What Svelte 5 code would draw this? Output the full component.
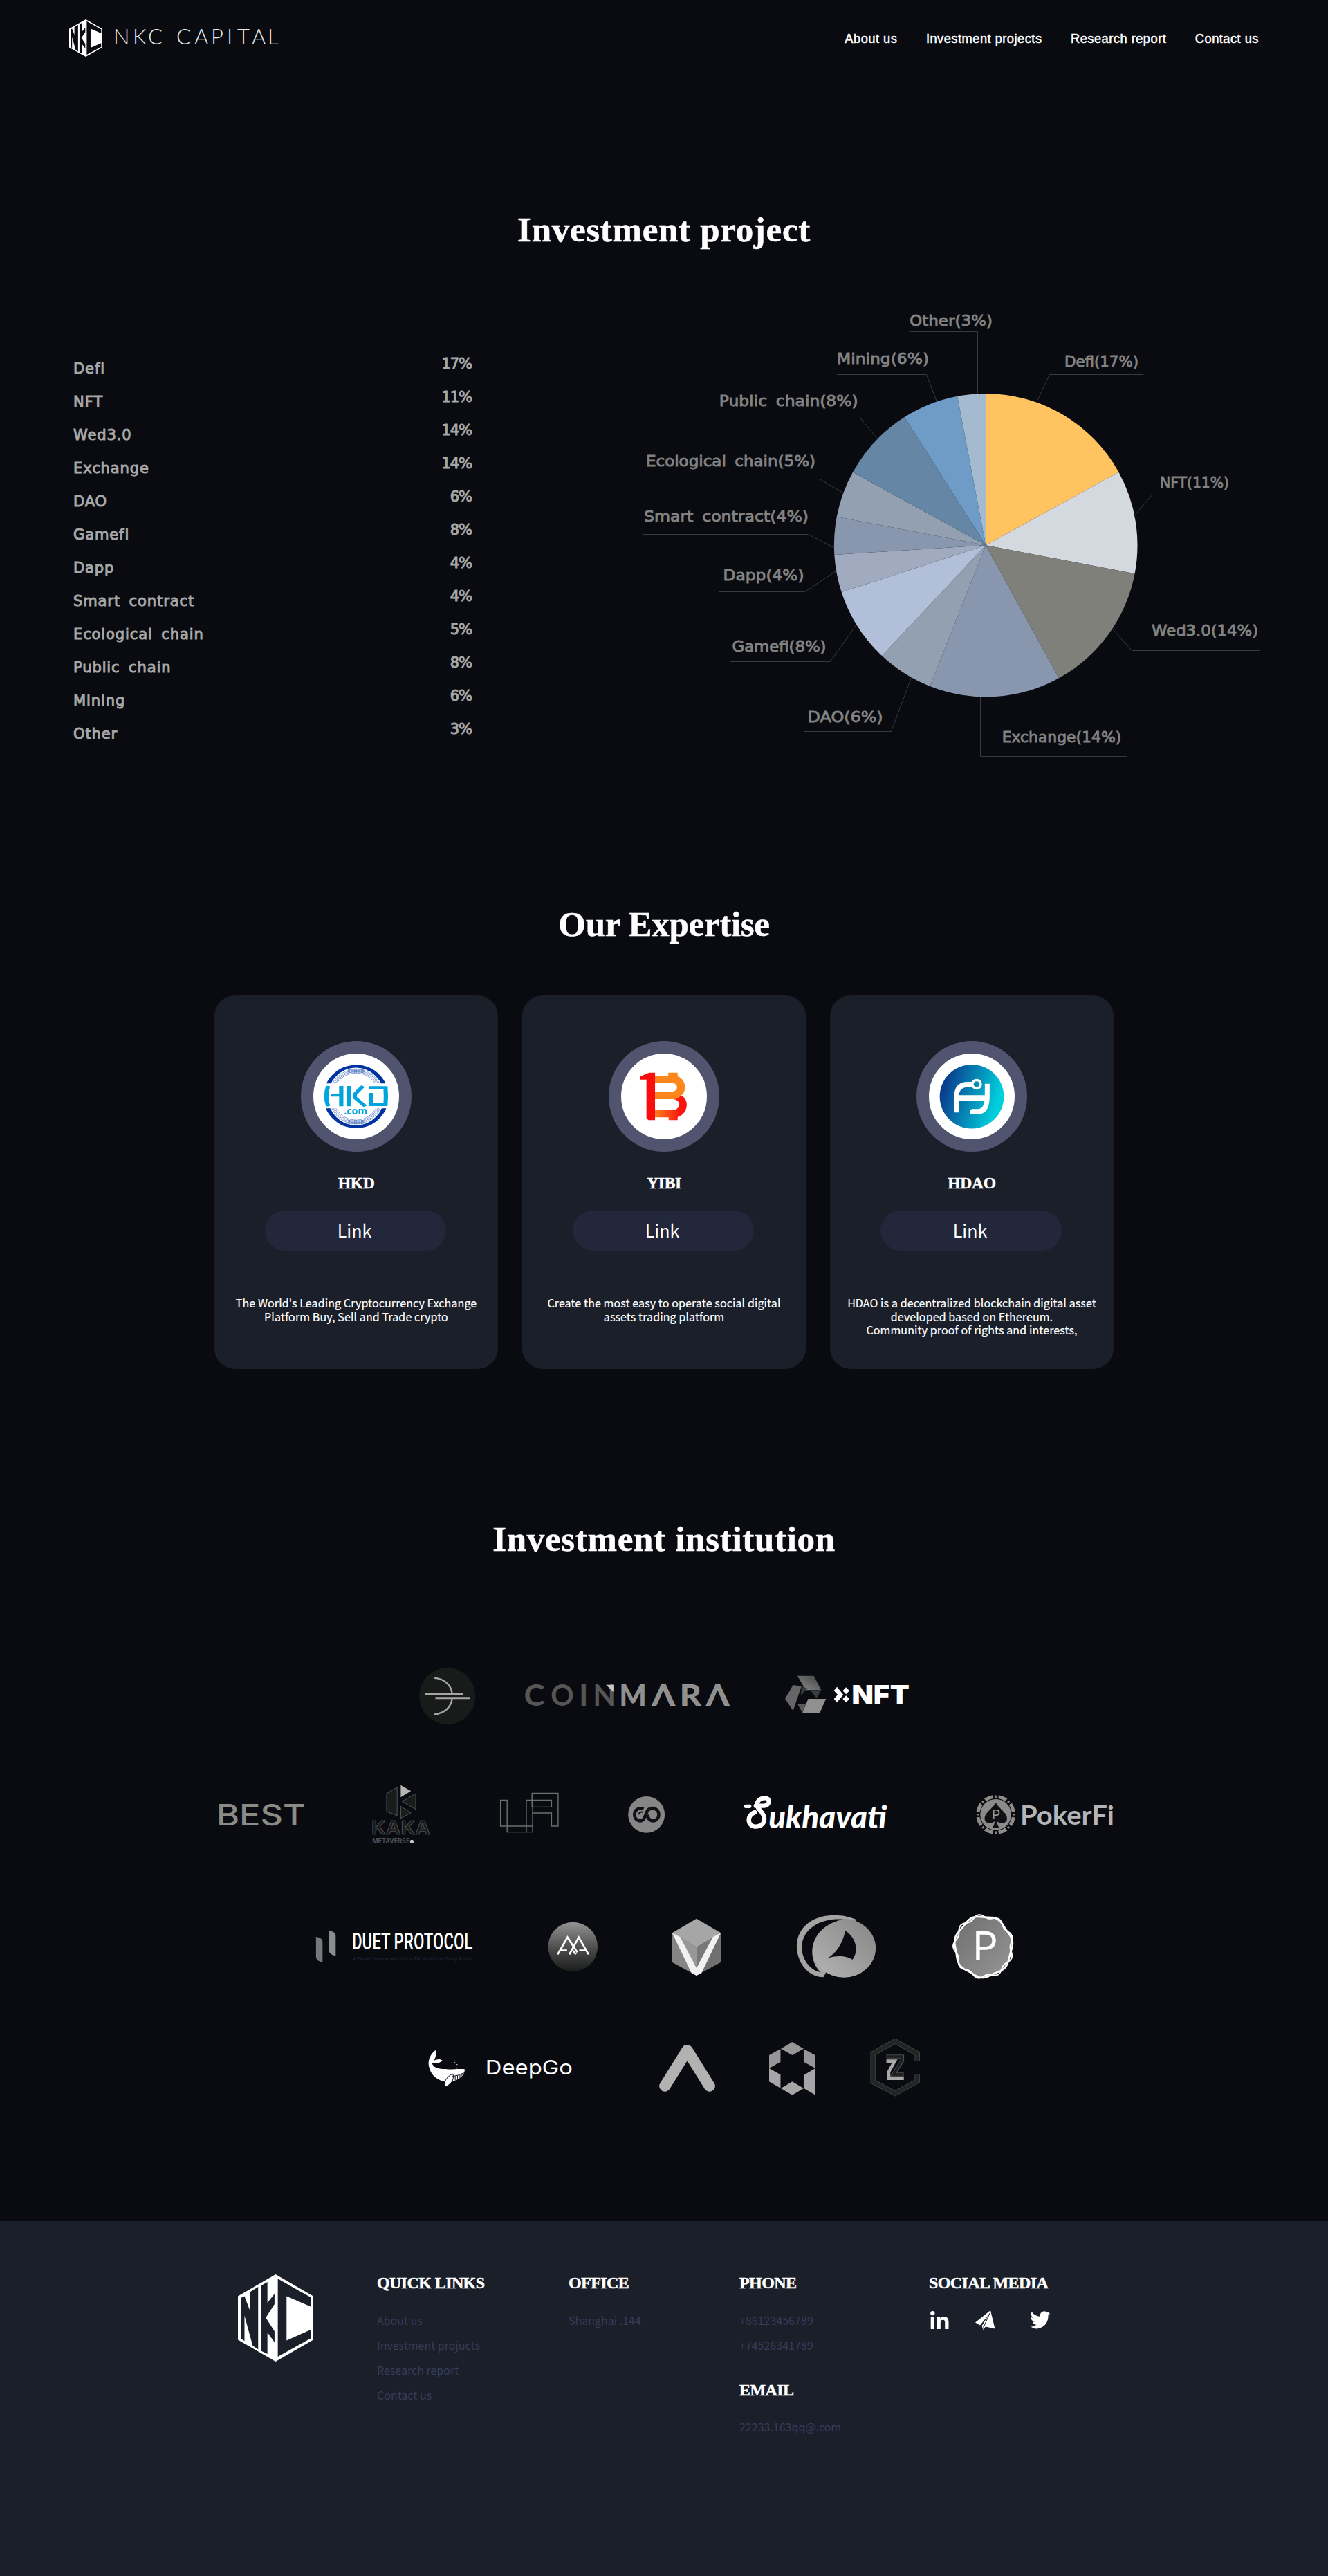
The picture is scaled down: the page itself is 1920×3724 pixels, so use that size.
<script>
  const nav = ['About us', 'Investment projects', 'Research report', 'Contact us'];

  // Share of each sector, with its callout line and label on the 920 x 690 chart canvas
  const sectors = [
    { name: 'Defi', share: 17, color: '#ffc360', line: '579,150.5 597.3,111.5 733.4,111.5', x: 619, y: 100.3, w: 107 },
    { name: 'NFT', share: 11, color: '#d4d8df', line: '721,314.2 745.8,285.5 864.3,285.5', x: 757, y: 274.6, w: 100 },
    { name: 'Wed3.0', share: 14, color: '#80807a', line: '688.3,479.2 716.4,510.5 901.2,510.5', x: 745, y: 489.3, w: 154 },
    { name: 'Exchange', share: 14, color: '#8896ae', line: '497.5,577.3 497.5,663.5 708.8,663.5', x: 528.7, y: 642.5, w: 172.5 },
    { name: 'DAO', share: 6, color: '#92a0b2', line: '242.9,627.5 368.5,627.5 397.8,549.2', x: 247.6, y: 614.3, w: 109 },
    { name: 'Gamefi', share: 8, color: '#b1bfd8', line: '135,526.5 280.5,526.5 318,473.5', x: 138.5, y: 511.8, w: 136 },
    { name: 'Dapp', share: 4, color: '#a1abbf', line: '119.7,425.5 243.5,425.5 289.3,395.2', x: 125.6, y: 409.2, w: 117 },
    { name: 'Smart contract', share: 4, color: '#8896ae', line: '10,342.5 248.8,342.5 285.7,361.7', x: 11, y: 324.3, w: 238 },
    { name: 'Ecological chain', share: 5, color: '#92a0b2', line: '11.7,262.5 264.6,262.5 299.2,282.5', x: 14, y: 244.2, w: 245 },
    { name: 'Public chain', share: 8, color: '#6686a5', line: '117.3,174.5 323.9,174.5 348.5,204.2', x: 119.7, y: 156.7, w: 201 },
    { name: 'Mining', share: 6, color: '#6e9cc7', line: '289.9,111.5 419.5,111.5 434.2,150', x: 290, y: 95.9, w: 133 },
    { name: 'Other', share: 3, color: '#a3bacf', line: '394.3,49.5 493.5,49.5 493.5,139', x: 395, y: 41, w: 120 }
  ];

  const cx = 505.2, cy = 358.2, r = 219.3;
  const at = (share) => {
    const a = (share / 100) * 2 * Math.PI;
    return `${(cx + r * Math.sin(a)).toFixed(2)} ${(cy - r * Math.cos(a)).toFixed(2)}`;
  };
  let sum = 0;
  const slices = sectors.map((s) => {
    const from = sum;
    sum += s.share;
    return { color: s.color, d: `M${cx} ${cy}L${at(from)}A${r} ${r} 0 0 1 ${at(sum)}Z` };
  });

  // Closed wavy ring drawn round the P badge
  const wave = (lobes, phase, amp) => {
    let d = '';
    for (let i = 0; i <= 180; i++) {
      const t = (i / 180) * 2 * Math.PI;
      const k = 1 + amp * Math.cos(lobes * t + phase);
      d += `${i ? 'L' : 'M'}${(1452 + 61 * k * Math.cos(t)).toFixed(1)} ${(222 + 131 * k * Math.sin(t)).toFixed(1)}`;
    }
    return d + 'Z';
  };

  // Letters of the Coinmara wordmark: glyph, left edge, advance
  const coin = [['C', 367, 62], ['O', 447, 69], ['I', 531, 28], ['N', 573, 68]];
  const mara = [['M', 652, 81], ['Λ', 749, 69], ['R', 832, 64], ['Λ', 911, 69]];

  const cards = [
    { name: 'HKD', lines: ["The World's Leading Cryptocurrency Exchange", 'Platform Buy, Sell and Trade crypto'] },
    { name: 'YIBI', lines: ['Create the most easy to operate social digital', 'assets trading platform'] },
    { name: 'HDAO', lines: ['HDAO is a decentralized blockchain digital asset', 'developed based on Ethereum.', 'Community proof of rights and interests,'] }
  ];
</script>

{#snippet mark()}
  <svg class="mark" viewBox="30 84 138 377" preserveAspectRatio="none" role="img" aria-label="NKC">
    <path fill="#fff" d="M99 84L168 178V367L99 461L30 367V178Z" />
    <path class="cut" d="M103 103L163 183V223L119 178V370L163 323V361L103 440Z" />
    <path class="cut" d="M36 185L42 178L52 240V160L67 138V408L57 392L42 262V372L36 362Z" />
    <path class="cut" d="M73 132L84 117V207L97 168V213L81 271L97 330V377L84 335V428L73 415Z" />
  </svg>
{/snippet}

<div class="page">
  <header>
    <div class="brand">
      {@render mark()}
      <svg width="260" height="54" viewBox="147 28 260 54">
        <text class="brandname" y="64" x="163 191 213 254 280 304 327 342 363 386">NKCCAPITAL</text>
      </svg>
    </div>
    <nav>
      {#each nav as item}<a href="#top">{item}</a>{/each}
    </nav>
  </header>

  <h2 class="first">Investment project</h2>
  <section class="project">
    <ul>
      {#each sectors as s}
        <li><span>{s.name}</span><b>{s.share}%</b></li>
      {/each}
    </ul>
    <svg class="pie" width="920" height="690" viewBox="0 0 920 690">
      {#each slices as s}<path d={s.d} fill={s.color} />{/each}
      {#each sectors as s}
        <polyline points={s.line} />
        <text x={s.x} y={s.y} textLength={s.w} lengthAdjust="spacingAndGlyphs">{s.name}({s.share}%)</text>
      {/each}
    </svg>
  </section>

  <h2 class="second">Our Expertise</h2>
  <section class="cards">
    {#each cards as card, i}
      <article>
        <div class="coin">
          {#if i === 0}
            <svg viewBox="273 278 221 335" preserveAspectRatio="none">
              <defs>
                <clipPath id="caps"><path d="M273 278H494V395H273ZM273 492H494V613H273Z" /></clipPath>
              </defs>
              <g clip-path="url(#caps)" fill="none">
                <ellipse cx="383" cy="446" rx="78" ry="118" stroke="#0033a0" stroke-width="11" />
                <g stroke="#5b7cc4" stroke-width="1.6">
                  <ellipse cx="383" cy="446" rx="69" ry="107" />
                  <ellipse cx="383" cy="446" rx="66" ry="102" />
                  <ellipse cx="383" cy="446" rx="63" ry="97" />
                  <ellipse cx="383" cy="446" rx="60" ry="92" />
                </g>
                <path d="M363 345H404M363 546H404" stroke="#5b7cc4" stroke-width="17" stroke-dasharray="1.6 1.4" />
              </g>
              <g fill="none" stroke="#00a5e0" stroke-width="11">
                <path d="M311 405Q302 446 311 484M345 405V484M318 441H345" />
                <path d="M364 405V484M401 405L380 437V450L407 484" />
                <path d="M416 411H459Q461 446 459 478H422V432" />
              </g>
              <text x="352" y="515" font-size="37" textLength="60" lengthAdjust="spacingAndGlyphs" class="dotcom">.com</text>
            </svg>
          {:else if i === 1}
            <svg viewBox="1066 278 220 335" preserveAspectRatio="none">
              <defs>
                <linearGradient id="ember"><stop offset="0" stop-color="#ff7f1c" /><stop offset=".8" stop-color="#fb1410" /></linearGradient>
              </defs>
              <path fill="url(#ember)" d="M1220 442C1241 455 1240 512 1211 526V538H1188V527H1153V498H1198C1221 498 1220 456 1198 456Z" />
              <path fill="#ff861c" d="M1153 365H1187V353H1211V367C1235 380 1234 430 1220 442C1214 452 1208 456 1198 456H1153V428H1193C1215 428 1215 392 1193 392H1153Z" />
              <path fill="#fb0d0d" d="M1115 368L1138 353H1153V538H1136L1131 530V380H1115Z" />
            </svg>
          {:else}
            <svg viewBox="549 278 372 335" preserveAspectRatio="none">
              <defs>
                <linearGradient id="sea" x1="0" y1=".35" x2="1" y2=".65"><stop offset=".05" stop-color="#0a3c8e" /><stop offset=".9" stop-color="#00d0dc" /></linearGradient>
              </defs>
              <ellipse cx="735" cy="446" rx="139" ry="125" fill="url(#sea)" />
              <g fill="none" stroke="#fff" stroke-width="21">
                <path d="M669 508V442Q671 399 718 399H738M669 451H800M802 396V450Q800 505 762 505H738" />
                <path d="M738 505H739" stroke-linecap="round" />
                <ellipse cx="756" cy="398" rx="18" ry="16" stroke-width="10" />
              </g>
            </svg>
          {/if}
        </div>
        <h3>{card.name}</h3>
        <a class="link" href="#top">Link</a>
        <p>{#each card.lines as line}<span>{line}</span>{/each}</p>
      </article>
    {/each}
  </section>

  <h2 class="third">Investment institution</h2>
  <section class="logos">
    <div class="row">
      <svg width="145.4" height="130" viewBox="0 0 300 390" preserveAspectRatio="none">
        <ellipse cx="137.5" cy="186" rx="83.5" ry="123" fill="#191a1a" />
        <g fill="none" stroke="#a5a5a5">
          <path d="M97 107C130 110 150 140 152 176M152 196C150 232 130 262 97 266" stroke-width="2.4" />
          <path d="M71 178H184M102 194H205" stroke-width="3" />
        </g>
      </svg>
      <svg width="378" height="130" viewBox="300 0 780 390" preserveAspectRatio="none">
        <g class="mara">
          <g fill="#565656">
            {#each coin as [glyph, x, w]}<text {x} y="227" textLength={w} lengthAdjust="spacingAndGlyphs">{glyph}</text>{/each}
          </g>
          <path d="M612 137H634V168Z" fill="#c9c9c4" />
          <g fill="#8f8f90" stroke="#b3ada2" stroke-width=".6">
            {#each mara as [glyph, x, w]}<text {x} y="227" textLength={w} lengthAdjust="spacingAndGlyphs">{glyph}</text>{/each}
          </g>
        </g>
      </svg>
      <svg width="236.5" height="130" viewBox="1080 0 488 390" preserveAspectRatio="none">
        <defs>
          <linearGradient id="steel" x1="0" y1="1" x2="1" y2="0"><stop offset="0" stop-color="#8d8d8d" /><stop offset="1" stop-color="#3f4042" /></linearGradient>
        </defs>
        <path fill="url(#steel)" d="M1183 98H1232L1254 160H1208Z" />
        <path fill="#3b3c3e" d="M1222 161H1254L1240 195Z" />
        <path fill="#666" d="M1170 138L1195 143L1170 250L1146 197Z" />
        <path fill="#37383a" d="M1195 143L1213 152L1193 183Z" />
        <path fill="#909090" d="M1215 198H1268L1250 258H1198Z" />
        <path fill="#5a5a5a" d="M1183 220L1208 222L1198 258Z" />
        <path fill="#fff" d="M1292 162L1301 146L1320 180L1301 214L1292 198L1303 180ZM1328 148L1338 163L1328 178L1318 163ZM1328 184L1338 198L1328 214L1318 198Z" />
        <text class="inter" x="1345" y="220" font-size="110" font-weight="900" fill="#fff" textLength="172" lengthAdjust="spacingAndGlyphs">NFT</text>
      </svg>
    </div>

    <div class="row second-row">
      <svg width="173.5" height="130" viewBox="0 0 400 390" preserveAspectRatio="none">
        <text class="inter" x="30" y="236" font-size="128" font-weight="500" fill="#8c8a85" textLength="297" lengthAdjust="spacingAndGlyphs">BEST</text>
      </svg>
      <svg width="195.2" height="130" viewBox="400 0 450 390" preserveAspectRatio="none">
        <g fill="#1a1b1b" stroke="#62666e" stroke-width=".8">
          <path d="M596 98L631 72V194L596 177ZM647 133L693 99V167ZM643 154L677 182L643 206Z" />
          <text class="inter" x="545" y="277" font-size="83" font-weight="700" textLength="196" lengthAdjust="spacingAndGlyphs">KAKA</text>
        </g>
        <path d="M643 62L677 88L643 115Z" fill="#b5b5b5" />
        <text class="inter" x="548" y="315" font-size="31" font-weight="700" fill="#4d5058" textLength="125" lengthAdjust="spacingAndGlyphs">METAVERSE</text>
        <ellipse cx="680" cy="307" rx="6" ry="8" fill="#ccc" />
      </svg>
      <svg width="195.2" height="130" viewBox="850 0 450 390" preserveAspectRatio="none">
        <path fill="none" stroke="#6c706b" stroke-width="1.4" d="M1083 127V266H998V127H976V240H1083M1062 266V127H1146V157H1081V97H1168V240H1146V183H1081" />
      </svg>
      <svg width="116.2" height="130" viewBox="1300 0 268 390" preserveAspectRatio="none">
        <ellipse cx="1463" cy="190" rx="61" ry="79" fill="#868686" />
        <g fill="none" stroke="#101114" stroke-width="4.6">
          <path d="M1453 166C1440 157 1423 168 1423 190C1423 212 1438 222 1450 214C1460 206 1461 176 1470 168C1485 155 1504 167 1504 190C1504 213 1486 224 1474 212C1466 204 1466 196 1466 190" />
          <path d="M1450 180C1444 176 1438 182 1438 190" stroke-width="2" />
        </g>
      </svg>
      <svg class="sukhavati" width="306.1" height="130" viewBox="0 0 800 390" preserveAspectRatio="none">
        <g fill="none" stroke="#fff" stroke-linecap="round" stroke-linejoin="round" stroke-width="6.4">
          <path d="M100 154H114" stroke-width="5.4" />
          <path d="M138 152H170C190 150 195 118 172 118C150 118 135 140 146 160C158 178 176 196 168 222C160 246 120 250 113 224C108 204 116 188 134 180" />
        </g>
        <text class="script" x="186" y="249" font-size="138" textLength="446" lengthAdjust="spacingAndGlyphs">ukhavati</text>
      </svg>
      <svg width="293.9" height="130" viewBox="0 0 293.9 130">
        <g fill="none" stroke="#8d8c88" stroke-width="5">
          <circle cx="93.7" cy="63.3" r="26" pathLength="80" stroke-dasharray="6 4" stroke-dashoffset="-2" />
          <circle cx="93.7" cy="63.3" r="26" pathLength="80" stroke-dasharray="1.2 8.8" stroke-dashoffset=".6" stroke-width="3.4" />
        </g>
        <circle cx="93.7" cy="63.3" r="22.4" fill="#8b8b8b" />
        <path fill="#101115" d="M93.7 46C98 55 110 60 110 69C110 76 101 78 95.5 73C95.5 77 97 80 98.5 82H89C90.5 80 92 77 92 73C86 78 77.5 76 77.5 69C77.5 60 89.5 55 93.7 46Z" />
        <text x="88" y="70" font-size="19" class="inter" fill="#9a9a9a">P</text>
        <text class="lato" x="129" y="78" font-size="39" font-weight="700" fill="#b4b4b6" textLength="136" lengthAdjust="spacingAndGlyphs">PokerFi</text>
      </svg>
    </div>

    <div class="row third-row">
      <svg width="297.5" height="150" viewBox="0 0 440 450" preserveAspectRatio="none">
        <path fill="#77787b" d="M25 180Q39 184 39 202V291Q26 286 25 268Z" />
        <path fill="#8b8c8e" d="M53 152Q67 158 67 174V262Q54 258 53 242Z" />
        <text class="roboto" x="102" y="234" font-size="97" font-weight="500" fill="#fff" textLength="258" lengthAdjust="spacingAndGlyphs">DUET PROTOCOL</text>
        <text class="roboto" x="104" y="282" font-size="24" fill="#25273c" textLength="254" lengthAdjust="spacingAndGlyphs">A Parallel Universe which turns Flat Assets into Sharp Assets</text>
      </svg>
      <svg width="175.8" height="150" viewBox="440 0 260 450" preserveAspectRatio="none">
        <defs>
          <linearGradient id="dusk" x1="0" y1="0" x2="0" y2="1"><stop offset="0" stop-color="#949494" /><stop offset=".55" stop-color="#4a4a4a" /><stop offset="1" stop-color="#1b1c1d" /></linearGradient>
        </defs>
        <ellipse cx="573.5" cy="223" rx="53" ry="107" fill="url(#dusk)" />
        <path fill="none" stroke="#fff" stroke-width="2.7" d="M541 256L562 182L583 247M566 256L586 182L607 256M546 239H561M587 239H602M574 240L580 256" />
      </svg>
      <svg width="175.8" height="150" viewBox="700 0 260 450" preserveAspectRatio="none">
        <path fill="#858585" d="M787 163L839 225V348L787 290Z" />
        <path fill="#707070" d="M891 163L839 225V348L891 290Z" />
        <path fill="#a6a6a6" d="M787 163L839 101L891 163L839 225Z" />
        <path fill="#989898" d="M800 178L839 225V310Z" /><path fill="#787878" d="M878 178L839 225V310Z" />
        <path fill="#f1f1f1" d="M787 163L804 181L839 315L874 181L891 163L850 336L839 348L828 336Z" />
      </svg>
      <svg width="229.9" height="150" viewBox="960 0 340 450" preserveAspectRatio="none">
        <defs>
          <linearGradient id="shell" x1="0" y1="1" x2="1" y2="0"><stop offset="0" stop-color="#b5b5b5" /><stop offset="1" stop-color="#858585" /></linearGradient>
        </defs>
        <path fill="#a4a4a4" d="M1132 86C1080 88 1052 150 1053 225C1055 300 1080 355 1110 355L1180 105C1165 92 1150 86 1132 86Z" />
        <ellipse cx="1154" cy="229" rx="68" ry="127" fill="url(#shell)" />
        <path class="hole" d="M1152 104C1105 96 1062 145 1064 232C1066 290 1085 325 1104 334C1072 270 1080 135 1152 104Z" />
        <path class="hole" d="M1157 153C1152 200 1140 250 1118 273C1135 260 1160 260 1172 279C1184 250 1184 190 1157 153Z" />
      </svg>
      <svg width="181.2" height="150" viewBox="1300 0 268 450" preserveAspectRatio="none">
        <defs>
          <linearGradient id="slate" x1="0" y1="0" x2="1" y2="1"><stop offset="0" stop-color="#6f6f6f" /><stop offset="1" stop-color="#969696" /></linearGradient>
        </defs>
        <path d={wave(7, 1.2, 0.03)} fill="url(#slate)" stroke="#fff" stroke-width="2.6" />
        <path d={wave(9, 3, 0.06)} fill="none" stroke="#fff" stroke-width="2" />
        <text class="inter" x="1429" y="282" font-size="172" fill="#fff" textLength="54" lengthAdjust="spacingAndGlyphs">P</text>
      </svg>
    </div>

    <div class="row fourth-row">
      <svg width="290.8" height="120" viewBox="0 0 600 360" preserveAspectRatio="none">
        <path fill="#fff" d="M61 101C48 115 38 140 41 168C45 200 58 228 88 238H108C130 232 150 212 148 184C125 181 105 188 92 183C70 184 54 176 51 158C62 162 76 156 82 146C74 138 64 141 56 147C62 135 64 118 61 101Z" />
        <path fill="#fff" stroke="#0a0b10" stroke-width="1" d="M89 261C86 242 92 216 113 204C119 230 106 252 89 261Z" />
        <path fill="none" stroke="#0a0b10" stroke-width="1" d="M112 215Q130 212 146 200M120 214V233M127 212V229M134 209V222M140 206V214" />
        <path fill="#bbb" d="M116 153h4v5h-4zM124 162h3v4h-3zM122 176h4v5h-4zM119 146h2v3h-2z" />
        <text class="inter" x="210" y="208" font-size="87" fill="#fff" textLength="260" lengthAdjust="spacingAndGlyphs">DeepGo</text>
      </svg>
      <svg width="174.5" height="120" viewBox="600 0 360 360" preserveAspectRatio="none">
        <path fill="none" stroke="#b2b2b2" stroke-width="16.2" stroke-linecap="round" stroke-linejoin="round" d="M745 257L811.5 102L878 257" />
      </svg>
      <svg width="155.1" height="120" viewBox="960 0 320 360" preserveAspectRatio="none">
        <path fill="#969696" d="M1126 66L1160 95L1126 123L1092 95ZM1057 123L1091 96V152L1057 180ZM1160 96L1195 124V180L1160 152Z" />
        <path fill="#a6a6a6" d="M1057 180L1091 208V266L1057 238ZM1126 238L1160 267L1126 296L1092 267ZM1160 210L1195 180V296L1160 266Z" />
      </svg>
      <svg width="139.6" height="120" viewBox="1280 0 288 360" preserveAspectRatio="none">
        <g fill="none">
          <path stroke="#45474a" stroke-width="7.4" d="M1499 150V116L1433 63L1367 116V238L1433 289L1499 236V205" />
          <path stroke="#232424" stroke-width="5.8" d="M1499 149V116L1433 63L1367 116V238L1433 289L1499 236V206" />
          <path stroke="#4a4b4d" stroke-width="5.6" d="M1407 129H1454V148L1428 207H1459" />
          <path stroke="#1c1d1e" stroke-width="3.6" d="M1408 129H1453V148L1428 207H1458" />
          <path stroke="#a9a9a9" stroke-width="4.6" d="M1407 149H1432L1414 195V224H1459" />
        </g>
      </svg>
    </div>
  </section>

  <footer>
    {@render mark()}
    <div class="col quick">
      <h4>QUICK LINKS</h4>
      <a href="#top">About us</a><a href="#top">Investment projucts</a><a href="#top">Research report</a><a href="#top">Contact us</a>
    </div>
    <div class="col office">
      <h4>OFFICE</h4>
      <span>Shanghai .144</span>
    </div>
    <div class="col phone">
      <h4>PHONE</h4>
      <span>+86123456789</span><span>+74526341789</span>
      <h4 class="email">EMAIL</h4>
      <span>22233.163qq@.com</span>
    </div>
    <div class="col">
      <h4>SOCIAL MEDIA</h4>
      <div class="social">
        <svg width="27" height="26" viewBox="0 0 27 26" fill="#fff"><circle cx="3.3" cy="3.2" r="3.1" /><path d="M.7 8.6H6V26H.7ZM9.500 8.600H14.500V11C15.500 9.200 17.500 8.200 20 8.200C25 8.200 26.500 11.400 26.500 16V26H21.200V17C21.200 14.600 20.800 12.700 18.200 12.700C15.600 12.700 14.800 14.500 14.800 17V26H9.500Z" /></svg>
        <svg class="plane" width="29" height="28" viewBox="0 0 29 28"><path fill="#fff" d="M22 0L0 17.5L7 21.5L20 5.5L9.5 22.5L11.3 28L15 23.5L28.5 26.5Z" /><path fill="none" stroke="#1b1f2a" stroke-width="1" d="M12.500 23.500L21 4M12 27V22.500" /></svg>
        <svg class="bird" width="29" height="26" viewBox="0 0 24 20" preserveAspectRatio="none" fill="#fff"><path d="M23.600 2.400a9.600 9.600 0 0 1-2.800.8A4.900 4.900 0 0 0 22.900.5a9.700 9.700 0 0 1-3.100 1.200A4.900 4.900 0 0 0 11.500 6.100 13.900 13.900 0 0 1 1.400 1a4.900 4.900 0 0 0 1.500 6.500A4.900 4.900 0 0 1 .7 6.900a4.900 4.900 0 0 0 3.900 4.900 4.900 4.900 0 0 1-2.200.1A4.900 4.900 0 0 0 7 15.200 9.800 9.800 0 0 1-.2 17.200 13.800 13.800 0 0 0 21.100 4.900a9.800 9.800 0 0 0 2.500-2.500Z" /></svg>
      </div>
    </div>
  </footer>
</div>

<style>
  :global(body) {
    background: #0a0b10;
  }
  .page {
    width: 1920px;
    height: 3724px;
    overflow: hidden;
    background: #0a0b10;
    color: #fff;
    font-family: 'Noto Sans CJK SC', 'Noto Sans', sans-serif;
  }
  svg {
    display: block;
    flex: none;
  }
  a {
    color: inherit;
    text-decoration: none;
  }
  h2,
  h3,
  h4,
  p,
  ul {
    margin: 0;
    padding: 0;
  }
  h2,
  h3,
  h4 {
    font-family: 'Liberation Serif', serif;
    font-weight: 700;
    -webkit-text-stroke: 0.5px #fff;
  }
  header {
    height: 110px;
    box-sizing: border-box;
    padding: 0 100px;
    display: flex;
    align-items: center;
    justify-content: space-between;
  }
  .brand {
    display: flex;
  }
  header .mark {
    width: 48px;
    height: 54px;
  }
  .cut {
    fill: #0a0b10;
  }
  .brandname {
    font: 300 31px Lato, sans-serif;
    fill: #e8ebea;
  }
  nav {
    display: flex;
    gap: 41.5px;
    font: 18.3px/22px 'Liberation Sans', sans-serif;
    letter-spacing: 0.48px;
    -webkit-text-stroke: 0.5px #fff;
    padding-top: 1px;
  }
  h2 {
    font-size: 51px;
    line-height: 60px;
    text-align: center;
    letter-spacing: 0.7px;
  }
  .first {
    margin-top: 192px;
  }
  .second {
    margin-top: 186px;
    letter-spacing: -0.3px;
  }
  .third {
    margin-top: 216px;
  }
  .project {
    height: 690px;
    margin-top: 68px;
    padding: 0 80px 0 106px;
    display: flex;
    justify-content: space-between;
  }
  ul {
    list-style: none;
    width: 576px;
    padding-top: 79px;
    font: 21px/48px 'DejaVu Sans', sans-serif;
    color: #a8a8a8;
  }
  li {
    display: flex;
    justify-content: space-between;
    height: 48px;
    letter-spacing: 0.9px;
    word-spacing: 5px;
  }
  li b {
    font-weight: 400;
    line-height: 34px;
    letter-spacing: -1px;
  }
  li span,
  li b {
    -webkit-text-stroke: 1px #a8a8a8;
  }
  .pie polyline {
    fill: none;
    stroke: #393a3e;
  }
  .pie text {
    font: 22px 'DejaVu Sans', sans-serif;
    fill: #838383;
    stroke: #838383;
    stroke-width: 0.9px;
    word-spacing: 5px;
  }
  .cards {
    margin-top: 73px;
    display: flex;
    justify-content: center;
    gap: 35px;
  }
  article {
    width: 410px;
    height: 540px;
    box-sizing: border-box;
    padding-top: 66px;
    border-radius: 30px;
    background: #1b1f2a;
    display: flex;
    flex-direction: column;
    align-items: center;
  }
  .coin {
    width: 124px;
    height: 124px;
    border: 18px solid #50546f;
    border-radius: 50%;
    background: #fff;
  }
  .coin svg {
    width: 124px;
    height: 124px;
  }
  .dotcom {
    font-family: 'Open Sans', sans-serif;
    font-weight: 700;
    fill: #00a5e0;
  }
  h3 {
    margin-top: 30px;
    font-size: 23.5px;
    line-height: 30px;
    letter-spacing: -0.3px;
  }
  .link {
    margin-top: 25px;
    margin-right: 2px;
    width: 262px;
    height: 58px;
    box-sizing: border-box;
    padding-right: 3px;
    border-radius: 29px;
    background: #23273b;
    font-size: 25px;
    line-height: 57px;
    text-align: center;
  }
  article p {
    margin-top: 66px;
    font-size: 16px;
    line-height: 19.6px;
    text-align: center;
    letter-spacing: 0.1px;
    -webkit-text-stroke: 0.2px #fff;
  }
  article p span {
    display: block;
    white-space: nowrap;
  }
  .logos {
    margin-top: 135px;
  }
  .logos svg * {
    vector-effect: non-scaling-stroke;
  }
  .row {
    display: flex;
    padding-left: 580px;
  }
  .second-row {
    margin-top: 40px;
    padding-left: 300px;
  }
  .sukhavati {
    margin-left: 60px;
  }
  .third-row {
    margin-top: 50px;
    padding-left: 440px;
  }
  .fourth-row {
    margin-top: 40px;
    padding-left: 600px;
  }
  .mara text {
    font: 700 124px Lato, sans-serif;
  }
  .inter {
    font-family: Inter, sans-serif;
  }
  .lato {
    font-family: Lato, sans-serif;
  }
  .roboto {
    font-family: Roboto, sans-serif;
  }
  .script {
    font-family: Lato, sans-serif;
    font-weight: 900;
    font-style: italic;
    fill: #fff;
  }
  .hole {
    fill: #0a0b10;
  }
  footer {
    margin-top: 161px;
    height: 513px;
    box-sizing: border-box;
    padding: 77px 0 0 344px;
    display: flex;
    background: #1b1f2a;
  }
  footer .mark {
    width: 109px;
    height: 126px;
    margin-right: 92px;
  }
  footer .cut {
    fill: #1b1f2a;
  }
  .col {
    display: flex;
    flex-direction: column;
    font-size: 16px;
    line-height: 36px;
    color: #373c5a;
  }
  .quick {
    width: 277px;
  }
  .office {
    width: 247px;
  }
  .phone {
    width: 274px;
  }
  h4 {
    margin-bottom: 24px;
    font-size: 24px;
    line-height: 24px;
    letter-spacing: -0.6px;
    color: #fff;
  }
  .email {
    margin-top: 35px;
    margin-bottom: 23px;
  }
  .social {
    display: flex;
    padding-top: 5px;
    padding-left: 2px;
  }
  .plane {
    margin-left: 38px;
    margin-top: -1px;
  }
  .bird {
    margin-left: 51px;
  }
</style>
